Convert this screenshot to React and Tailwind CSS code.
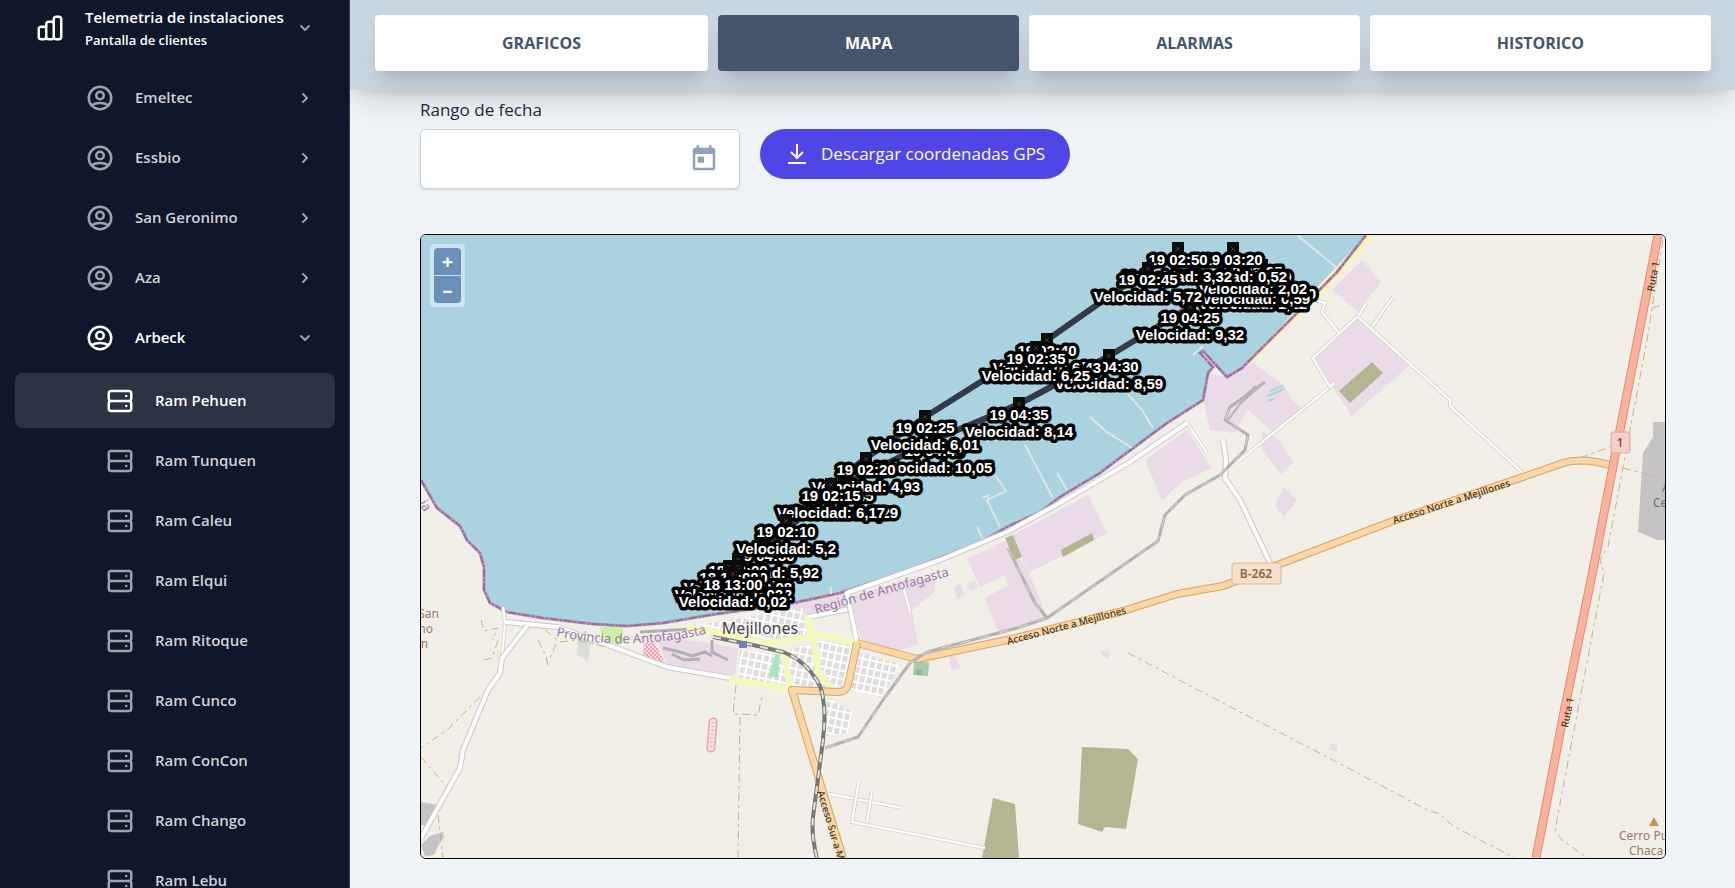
import React, { useState } from "react";
import {
  HiChevronDown,
  HiChevronRight,
  HiOutlineChartBar,
  HiOutlineServer,
  HiOutlineUserCircle,
} from "react-icons/hi";
import { MdToday } from "react-icons/md";

const clients = ["Emeltec", "Essbio", "San Geronimo", "Aza", "Arbeck"];

const ships = [
  "Ram Pehuen",
  "Ram Tunquen",
  "Ram Caleu",
  "Ram Elqui",
  "Ram Ritoque",
  "Ram Cunco",
  "Ram ConCon",
  "Ram Chango",
  "Ram Lebu",
];

const tabs = ["GRAFICOS", "MAPA", "ALARMAS", "HISTORICO"];

// newest first, so the older points are painted on top
const positions = [
  { x: 765, y: 538, date: "19 04:50", speed: "5,92" },
  { x: 844, y: 478, date: "19 04:45", speed: "7,29" },
  { x: 934, y: 433, date: "19 04:40", speed: "10,05" },
  { x: 1019, y: 397, date: "19 04:35", speed: "8,14" },
  { x: 1109, y: 349, date: "19 04:30", speed: "8,59" },
  { x: 1190, y: 300, date: "19 04:25", speed: "9,32" },
  { x: 1253, y: 269, date: "19 04:20", speed: "1,12" },
  { x: 1262, y: 259, date: "19 04:00", speed: "0,20" },
  { x: 1256, y: 264, date: "19 03:40", speed: "0,59" },
  { x: 1253, y: 254, date: "19 03:25", speed: "2,02" },
  { x: 1233, y: 242, date: "19 03:20", speed: "0,52" },
  { x: 1178, y: 242, date: "19 02:50", speed: "3,32" },
  { x: 1148, y: 262, date: "19 02:45", speed: "5,72" },
  { x: 1047, y: 333, date: "19 02:40", speed: "6,43" },
  { x: 1036, y: 341, date: "19 02:35", speed: "6,25" },
  { x: 925, y: 410, date: "19 02:25", speed: "6,01" },
  { x: 866, y: 452, date: "19 02:20", speed: "4,93" },
  { x: 831, y: 478, date: "19 02:15", speed: "6,17" },
  { x: 786, y: 514, date: "19 02:10", speed: "5,2" },
  { x: 738, y: 553, date: "18 18:00", speed: "0,08" },
  { x: 738, y: 560, date: "18 17:30", speed: "0,02" },
  { x: 729, y: 560, date: "18 17:00", speed: "0,02" },
  { x: 733, y: 567, date: "18 13:00", speed: "0,02" },
];

const pinkAreas = [
  "1208,373 1227,377 1253,363 1284,385 1290,397 1303,410 1275,434 1248,410 1235,433 1210,430 1203,400",
  "1262,432 1277,438 1294,462 1281,474 1262,450",
  "1284,487 1297,500 1284,517 1275,505",
  "1362,260 1381,282 1358,312 1332,290",
  "1358,318 1410,365 1352,416 1313,358",
  "1145,460 1187,430 1212,468 1182,482 1162,500",
  "1013,535 1088,495 1107,533 1070,552 1028,573",
  "967,558 1000,545 1005,575 980,587",
  "985,598 1008,585 995,545 1008,540 1030,575 1047,617 998,632",
  "855,617 852,596 905,580 935,578 935,592 912,610 918,645 893,652 862,642",
  "953,587 960,583 965,595 958,599",
  "967,584 975,581 978,588 970,591",
  "785,603 845,592 846,610 800,615",
  "655,635 738,648 735,675 668,666",
  "949,657 955,655 960,668 951,670",
  "1101,650 1109,652 1109,659 1102,656",
  "1331,743 1338,745 1336,752 1329,750",
];

const oliveAreas = [
  "1372,362 1383,373 1350,403 1339,391",
  "1005,538 1013,535 1022,557 1015,560",
  "1061,550 1092,533 1094,540 1063,557",
  "1082,747 1128,749 1138,759 1126,829 1105,827 1102,832 1078,824",
  "993,798 1015,804 1019,858 982,858",
];

const greyAreas = [
  "1653,422 1666,422 1666,540 1658,540 1638,532 1643,453 1653,437",
  "421,802 438,805 427,826 421,825",
  "421,845 430,836 443,832 444,837 438,846 434,855 425,856",
];

const townBlocks = [
  "697,625 803,608 806,634 770,643",
  "740,650 780,654 789,687 738,681",
  "787,650 812,644 816,674 829,688 793,687",
  "818,640 858,646 846,686 834,686 821,670",
  "861,653 900,664 882,698 851,690",
  "824,695 852,712 848,733 825,736",
];

const piers = [
  "M1297 235L1337 268",
  "M1090 417L1107 432L1132 448",
  "M1127 393L1142 410L1153 428",
  "M1025 445L1053 498",
  "M1057 473L1067 490",
  "M995 475L1006 491L987 500L1000 527",
  "M982 498L990 495",
  "M977 527L984 541",
  "M1193 355L1203 346",
  "M831 587L831 594",
];

const minorRoads = [
  "M503 607L505 622L502 658",
  "M1187 423L1207 453",
  "M1240 460L1330 387",
  "M1334 383L1330 387L1313 358L1358 316",
  "M1358 317L1366 303",
  "M1372 327L1393 297",
  "M1358 317L1450 400L1450 406L1523 473",
  "M1339 333L1322 312L1325 303L1315 300",
  "M825 793L902 808",
  "M859 780L852 822L985 848",
  "M872 790L867 823",
  "M903 585L910 612",
];

const mainRoads = [
  "M505 622L557 627L600 642L667 667L730 678",
  "M527 626L502 658L500 673L488 690L463 750L460 768L421 838",
  "M808 617L850 609",
  "M857 642L847 593L940 560L1007 532L1060 503L1130 462L1187 423",
  "M1223 440L1226 460L1225 478L1240 500L1270 563",
];

const tracks = [
  "M1128 653L1200 691L1327 757L1403 797L1427 810L1440 814L1453 826L1515 858",
  "M1663 240L1647 340L1630 430L1622 473L1608 547L1600 560L1604 573L1583 683L1555 830L1562 840L1587 858",
  "M480 697L448 729L421 748",
  "M421 757L447 787",
  "M438 815L443 858",
  "M740 717L738 858",
  "M736 685L733 714L758 715L763 693",
  "M1580 458L1610 447",
  "M1623 468L1650 475L1663 476",
  "M1652 308L1664 304",
  "M545 630L560 642L576 640L628 652L650 662",
  "M481 620L484 631L498 628L492 640",
  "M538 640L546 656L548 666",
  "M556 644L550 658",
  "M484 660L492 658L498 640",
];

const railBranch =
  "M825 748L858 737L883 700L910 663L927 652L1017 628L1047 618L1158 541L1165 515L1185 495L1220 475L1245 450L1248 435L1225 420L1230 407L1265 382";
const railSpur = "M1008 548L1035 603L1047 618";
const railMain =
  "M713 637L753 645L783 652Q807 661 820 686Q827 705 823 740L813 817Q811 835 817 858";

const coast =
  "M421 480L437 508L460 526L467 540L480 553L484 567L484 590L490 603L507 612L543 618L593 624L627 626L663 623L710 615L793 603L840 593L900 573L927 563L973 545L986 539L1007 527L1040 512L1060 497L1100 473L1117 460L1167 423L1203 400L1208 373L1213 367L1200 353L1203 351L1227 377L1242 368L1293 317L1337 272L1366 235";

const norte =
  "M857 643L917 659L1007 640L1123 611L1177 594L1223 586L1280 564L1343 540L1393 521L1523 477L1563 463Q1583 457 1613 466";
const urbano = "M857 643L848 685Q846 692 838 692L792 690L843 858";
const ruta1 = "M1658 235L1620 430L1593 570L1565 707L1536 858";

function RoadMap() {
  return (
    <svg
      className="block h-full w-full"
      viewBox="421 235 1244 623"
      preserveAspectRatio="xMidYMid slice"
      role="img"
      aria-label="Mapa de Mejillones"
    >
      <defs>
        <pattern
          id="streets"
          width="7"
          height="8"
          patternUnits="userSpaceOnUse"
          patternTransform="rotate(12)"
        >
          <rect width="7" height="8" fill="#e0dedc" />
          <path d="M0 1H7M1 0V8" stroke="#fff" strokeWidth="2" />
        </pattern>
        <pattern id="dots" width="4" height="4" patternUnits="userSpaceOnUse">
          <rect width="4" height="4" fill="#f7dfe0" />
          <circle cx="1" cy="1" r="1" fill="#f08a9c" />
          <circle cx="3" cy="3" r="1" fill="#f08a9c" />
        </pattern>
        <path id="provincia" d="M556 636Q630 652 710 633" />
      </defs>

      <rect x="421" y="235" width="1244" height="623" fill="#f2efe9" />
      <path d={coast + "L421 235Z"} fill="#aad3df" />
      <polygon
        points="1366,235 1376,235 1350,264 1320,298 1244,370 1240,370 1242,368"
        fill="#fff1ba"
      />

      {pinkAreas.map((p) => (
        <polygon key={p} points={p} fill="#ebdbe8" />
      ))}
      {oliveAreas.map((p) => (
        <polygon key={p} points={p} fill="#b5b592" />
      ))}
      {greyAreas.map((p) => (
        <polygon key={p} points={p} fill="#c5c3c4" />
      ))}
      <polygon points="578,632 592,637 588,661 577,655" fill="#dddddd" />
      <polygon points="600,627 623,627 623,642 618,646 602,638" fill="#cdf0a8" />
      <polygon points="914,662 929,662 928,676 913,675" fill="#aacbaf" />
      <rect x="916" y="669" width="6" height="6" fill="#8fba92" />
      <polygon points="644,643 655,643 665,663 643,657" fill="url(#dots)" />
      <path
        d="M713 722L711 748"
        stroke="#f29fab"
        strokeWidth="9"
        strokeLinecap="round"
      />
      <path
        d="M713 722L711 748"
        stroke="#f4e3df"
        strokeWidth="6"
        strokeLinecap="round"
      />
      <path
        d="M713 722L711 748"
        stroke="#f2a5b0"
        strokeWidth="3"
        strokeDasharray="1 3"
      />
      {townBlocks.map((p) => (
        <polygon key={p} points={p} fill="url(#streets)" />
      ))}
      <polygon points="775,654 780,654 778,678 769,676" fill="#a5e6c4" />
      <path
        d="M1270 391L1283 386M1268 396L1284 389M1268 401L1274 399"
        stroke="#aad3df"
        strokeWidth="2"
      />

      <path d={coast} fill="none" stroke="#b592b4" strokeWidth="3" />
      <path
        d={coast}
        fill="none"
        stroke="#7d6187"
        strokeWidth="2"
        strokeDasharray="8 2 2 2"
        opacity="0.6"
      />
      {piers.map((d) => (
        <path key={d} d={d} fill="none" stroke="#dfe6e4" strokeWidth="2" />
      ))}

      <path
        d="M663 648L680 652L692 656L705 652L712 656M672 654L684 660L700 659M712 640V652L728 660M640 632L690 629"
        fill="none"
        stroke="#b3afb3"
        strokeWidth="3"
      />

      {tracks.map((d) => (
        <path
          key={d}
          d={d}
          fill="none"
          stroke="#cdb27d"
          strokeWidth="1"
          strokeDasharray="8 4 3 4"
        />
      ))}

      {minorRoads.map((d) => (
        <g key={d} fill="none" strokeLinejoin="round">
          <path d={d} stroke="#dad7d5" strokeWidth="4" />
          <path d={d} stroke="#ffffff" strokeWidth="2" />
        </g>
      ))}
      {mainRoads.map((d) => (
        <g key={d} fill="none" strokeLinejoin="round">
          <path d={d} stroke="#cbc8c6" strokeWidth="6" />
          <path d={d} stroke="#ffffff" strokeWidth="4" />
        </g>
      ))}

      <g fill="none" stroke="#f4f8b9" strokeWidth="6" strokeLinejoin="round">
        <path d="M687 627L720 633L770 643L820 635L857 643" />
        <path d="M808 617L813 640L818 673L832 688" />
        <path d="M729 679L790 689L783 647" />
      </g>

      {[norte, urbano].map((d) => (
        <g key={d} fill="none" strokeLinejoin="round">
          <path d={d} stroke="#cfa765" strokeWidth="8" />
          <path d={d} stroke="#fcd6a4" strokeWidth="6" />
        </g>
      ))}
      <path d={ruta1} fill="none" stroke="#e08a78" strokeWidth="9" />
      <path d={ruta1} fill="none" stroke="#f9b29c" strokeWidth="7" />

      {[railBranch, railSpur].map((d) => (
        <g key={d} fill="none" strokeLinejoin="round">
          <path d={d} stroke="#b4b2b1" strokeWidth="3" />
          <path
            d={d}
            stroke="#dddbd8"
            strokeWidth="1"
            strokeDasharray="10 10"
          />
        </g>
      ))}
      <path
        d="M1262 384L1240 404L1228 420M1256 386L1236 404"
        fill="none"
        stroke="#b4b2b1"
        strokeWidth="2"
      />
      <path d={railMain} fill="none" stroke="#777777" strokeWidth="4" />
      <path
        d={railMain}
        fill="none"
        stroke="#e4e2df"
        strokeWidth="2"
        strokeDasharray="8 8"
      />
      <rect x="739" y="641" width="8" height="7" fill="#7380b3" />

      <g className="font-['Noto_Sans',sans-serif]">
        <text
          x="760"
          y="634"
          textAnchor="middle"
          fontSize="16"
          fill="#444444"
          stroke="#ffffff"
          strokeWidth="2"
          strokeOpacity="0.6"
          paintOrder="stroke"
        >
          Mejillones
        </text>
        <g fontSize="13" fill="#9b78a8">
          <text>
            <textPath href="#provincia">Provincia de Antofagasta</textPath>
          </text>
          <text transform="translate(816 614) rotate(-16)">
            Región de Antofagasta
          </text>
          <text transform="translate(419 503) rotate(60)">ia</text>
        </g>
        <g fontSize="10" fontWeight="500" fill="#4a3a20">
          <text transform="translate(1008 645) rotate(-15)">
            Acceso Norte a Mejillones
          </text>
          <text transform="translate(1394 524) rotate(-18)">
            Acceso Norte a Mejillones
          </text>
          <text transform="translate(817 792) rotate(73)">
            Acceso Sur a Mejillones
          </text>
          <text transform="translate(1654 292) rotate(-80)">Ruta 1</text>
          <text transform="translate(1568 728) rotate(-79)">Ruta 1</text>
        </g>
        <g fontSize="12" fill="#9b7a63">
          <text x="439" y="618" textAnchor="end">
            San
          </text>
          <text x="433" y="633" textAnchor="end">
            no
          </text>
          <text x="428" y="648" textAnchor="end">
            m
          </text>
          <text x="1619" y="840">
            Cerro Pu
          </text>
          <text x="1629" y="855">
            Chaca
          </text>
        </g>
        <g fontSize="12" fill="#716d78">
          <text x="1662" y="492">
            A
          </text>
          <text x="1653" y="507">
            Ce
          </text>
        </g>
        <polygon points="1654,817 1659,826 1649,826" fill="#d08f55" />
        <rect
          x="1611"
          y="432"
          width="19"
          height="21"
          rx="2"
          fill="#f5d0ca"
          stroke="#dfa599"
        />
        <text
          x="1620"
          y="447"
          textAnchor="middle"
          fontSize="12"
          fontWeight="600"
          fill="#8c5550"
        >
          1
        </text>
        <rect
          x="1232"
          y="563"
          width="49"
          height="21"
          rx="2"
          fill="#f6e0ca"
          stroke="#dbb898"
        />
        <text
          x="1256"
          y="578"
          textAnchor="middle"
          fontSize="12"
          fontWeight="600"
          fill="#8a6b3c"
        >
          B-262
        </text>
      </g>

      <g
        fill="none"
        stroke="#343a4a"
        strokeWidth="6"
        strokeLinecap="round"
        strokeLinejoin="round"
      >
        <path d="M733 572L786 521L831 485L866 458L925 417L1036 347L1047 340L1148 269L1178 258L1253 272" />
        <path d="M765 545L844 485L934 440L1019 404L1109 356L1190 307L1253 279" />
      </g>

      <g
        className="font-['Liberation_Sans',sans-serif]"
        fontSize="15"
        fontWeight="700"
        fill="#ffffff"
        stroke="#000000"
        strokeWidth="7"
        strokeLinejoin="round"
        paintOrder="stroke"
        textAnchor="middle"
      >
        {positions.map((p) => (
          <g key={p.date}>
            <rect
              x={p.x - 6}
              y={p.y}
              width="12"
              height="12"
              fill="#0b0b0b"
              stroke="none"
            />
            <path
              d={`M${p.x - 2} ${p.y + 5}l4 4m0 -4l-4 4`}
              fill="none"
              stroke="#3a3a3a"
              strokeWidth="1"
            />
            <text x={p.x} y={p.y + 23}>
              {p.date}
            </text>
            <text x={p.x} y={p.y + 40}>
              Velocidad: {p.speed}
            </text>
          </g>
        ))}
      </g>
    </svg>
  );
}

function Sidebar({ ship, onSelect }) {
  return (
    <aside className="relative z-10 w-[350px] shrink-0 overflow-hidden border-r border-slate-700 bg-[#0f172a] pr-[14px] pl-[15px] text-[15px] font-semibold">
      <button
        type="button"
        className="flex h-[55px] w-full items-center pr-5 pl-5 text-left text-white"
      >
        <HiOutlineChartBar className="size-[30px]" />
        <span className="ml-5 flex-1 whitespace-nowrap">
          <span className="block leading-[25px]">
            Telemetria de instalaciones
          </span>
          <span className="block text-[13px] leading-5">
            Pantalla de clientes
          </span>
        </span>
        <HiChevronDown className="size-5 text-slate-400" />
      </button>

      <nav className="mt-[15px]">
        <ul className="flex flex-col gap-[5px]">
          {clients.map((client) => {
            const open = client === "Arbeck";
            return (
              <li key={client}>
                <button
                  type="button"
                  aria-expanded={open}
                  className={`flex h-[55px] w-full items-center pr-5 pl-[70px] text-left ${
                    open ? "text-white" : "text-[#cfd1d4]"
                  }`}
                >
                  <HiOutlineUserCircle
                    className={`size-[30px] ${
                      open ? "text-white" : "text-[#9fa2aa]"
                    }`}
                  />
                  <span className="ml-5 flex-1">{client}</span>
                  {open ? (
                    <HiChevronDown className="size-5 text-slate-400" />
                  ) : (
                    <HiChevronRight className="size-5 text-slate-400" />
                  )}
                </button>
              </li>
            );
          })}
        </ul>

        <ul className="mt-2 flex flex-col gap-[5px]">
          {ships.map((name) => {
            const active = name === ship;
            return (
              <li key={name}>
                <a
                  href="#"
                  onClick={() => onSelect(name)}
                  className={`flex h-[55px] items-center rounded-lg pl-[90px] ${
                    active ? "bg-[#2c3344] text-white" : "text-[#cfd1d4]"
                  }`}
                >
                  <HiOutlineServer
                    className={`size-[30px] ${
                      active ? "text-white" : "text-[#9fa2aa]"
                    }`}
                  />
                  <span className="ml-5">{name}</span>
                </a>
              </li>
            );
          })}
        </ul>
      </nav>
    </aside>
  );
}

export default function App() {
  const [tab, setTab] = useState("MAPA");
  const [ship, setShip] = useState("Ram Pehuen");
  const [range, setRange] = useState("");

  return (
    <div className="flex h-screen overflow-hidden bg-[#f0f4f9] font-['Open_Sans',sans-serif] text-slate-800">
      <Sidebar ship={ship} onSelect={setShip} />

      <main className="min-w-0 flex-1">
        <header className="flex gap-[10px] bg-slate-300 pt-[15px] pr-6 pb-[19px] pl-[25px] shadow-xl">
          {tabs.map((name) => (
            <button
              key={name}
              type="button"
              onClick={() => setTab(name)}
              className={`h-14 flex-auto rounded text-base font-bold shadow-xl ${
                tab === name
                  ? "bg-slate-600 text-white"
                  : "bg-white text-slate-600"
              }`}
            >
              {name}
            </button>
          ))}
        </header>

        <section className="pt-2 pr-[69px] pl-[70px]">
          <label
            htmlFor="range"
            className="mb-[7px] block text-[17px] leading-6 font-medium"
          >
            Rango de fecha
          </label>
          <div className="flex items-start gap-5">
            <div className="flex h-[60px] w-80 items-center rounded-md border border-slate-300 bg-white pr-5 shadow-sm">
              <input
                id="range"
                type="text"
                value={range}
                onChange={(e) => setRange(e.target.value)}
                className="h-full min-w-0 flex-1 px-4 outline-none"
              />
              <button type="button" aria-label="Abrir calendario">
                <MdToday className="size-[30px] text-slate-400" />
              </button>
            </div>
            <button
              type="button"
              className="flex h-[50px] items-center gap-3 rounded-full bg-[#4f46e5] px-[25px] text-[17px] font-medium text-white"
            >
              <svg
                className="size-6"
                viewBox="0 0 24 24"
                fill="none"
                stroke="currentColor"
                strokeWidth="2"
              >
                <path d="M12 2V15M6 10L12 16L18 10M3 21H21" />
              </svg>
              Descargar coordenadas GPS
            </button>
          </div>

          <div className="relative mt-[45px] h-[625px] overflow-hidden rounded-md border border-black">
            <RoadMap />
            <div className="absolute top-[9px] left-[9px] flex flex-col gap-px rounded bg-white/40 p-1 text-xl leading-none font-bold text-white">
              <button
                type="button"
                aria-label="Acercar"
                className="size-[27px] rounded-t-sm bg-[#6890ba]"
              >
                +
              </button>
              <button
                type="button"
                aria-label="Alejar"
                className="size-[27px] rounded-b-sm bg-[#6890ba]"
              >
                –
              </button>
            </div>
          </div>
        </section>
      </main>
    </div>
  );
}
